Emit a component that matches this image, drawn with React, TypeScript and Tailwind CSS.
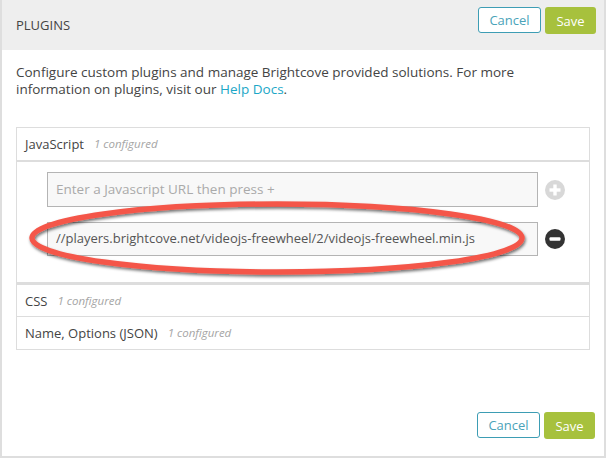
import React from "react";

const font = { fontFamily: '"Open Sans", "Liberation Sans", sans-serif' };

function Btns() {
  return (
    <div className="flex items-start gap-[4px]">
      <button className="h-[26px] w-[63px] rounded-[3px] border border-[#3d9db4] bg-white text-[13px] leading-[24px] text-[#4aa3b9]">
        Cancel
      </button>
      <button className="h-[27px] w-[51px] rounded-[3px] bg-[#a7c13d] text-[13px] leading-[26px] text-white">
        Save
      </button>
    </div>
  );
}

function Row({ name, last }: { name: string; last?: boolean }) {
  return (
    <div className={"flex h-[32px] items-center pl-[8px] " + (last ? "" : "border-b border-[#dddddd]")}>
      <span className="text-[13px] leading-[18px] text-[#444]">{name}</span>
      <span className="ml-[10px] text-[11.5px] leading-[18px] italic text-[#a5a5a5]">1 configured</span>
    </div>
  );
}

export default function App() {
  return (
    <div style={font} className="relative flex h-[458px] w-[606px] flex-col border-x-2 border-b-2 border-[#dedede] bg-white">
      <div className="flex h-[50px] items-start justify-between bg-[#eeeeee] pl-[14px] pr-[8px]">
        <span className="mt-[15px] text-[13px] leading-[20px] text-[#444]">PLUGINS</span>
        <div className="mt-[7px]">
          <Btns />
        </div>
      </div>
      <p className="mt-[14px] pl-[14px] pr-[20px] text-[13.5px] leading-[17px] text-[#444]">
        Configure custom plugins and manage Brightcove provided solutions. For more
        <br />
        information on plugins, visit our <span className="text-[#1ca7c7]">Help Docs</span>.
      </p>
      <div className="ml-[14px] mt-[29px] w-[574px] border border-[#dddddd]">
        <div className="flex h-[34px] items-center border-b-2 border-[#dddddd] pl-[8px]">
          <span className="text-[13px] leading-[18px] text-[#444]">JavaScript</span>
          <span className="ml-[10px] text-[11.5px] leading-[18px] italic text-[#a5a5a5]">1 configured</span>
        </div>
        <div className="flex flex-col gap-[15px] border-b-[3px] border-[#dddddd] pb-[26px] pl-[30px] pr-[24px] pt-[10px]">
          <div className="flex items-center">
            <div className="flex h-[35px] w-[491px] items-center border border-[#b4b4b4] bg-[#f8f8f8] pl-[8px] text-[13.5px] text-[#aaaaaa]">
              Enter a Javascript URL then press +
            </div>
            <svg width="20" height="20" viewBox="0 0 20 20" className="ml-[7px]">
              <circle cx="10" cy="10" r="10" fill="#d8d8d8" />
              <rect x="4.5" y="8.3" width="11" height="3.4" fill="#fff" />
              <rect x="8.3" y="4.5" width="3.4" height="11" fill="#fff" />
            </svg>
          </div>
          <div className="flex items-center">
            <div className="flex h-[34px] w-[491px] items-center border border-[#b4b4b4] bg-[#f8f8f8] pl-[8px] text-[13px] text-[#555]">
              //players.brightcove.net/videojs-freewheel/2/videojs-freewheel.min.js
            </div>
            <svg width="20" height="20" viewBox="0 0 20 20" className="ml-[7px]">
              <circle cx="10" cy="10" r="10" fill="#333333" />
              <rect x="4.5" y="8.3" width="11" height="3.4" rx="1" fill="#fff" />
            </svg>
          </div>
        </div>
        <Row name="CSS" />
        <Row name="Name, Options (JSON)" last />
      </div>
      <div className="flex-1" />
      <div className="flex justify-end pb-[17px] pr-[9px]">
        <Btns />
      </div>
      <svg className="pointer-events-none absolute left-0 top-0" width="606" height="458">
        <defs>
          <filter id="sh" x="-10%" y="-30%" width="120%" height="160%">
            <feDropShadow dx="1" dy="2" stdDeviation="1.5" floodColor="#000" floodOpacity="0.55" />
          </filter>
        </defs>
        <ellipse cx="275" cy="238" rx="245" ry="34" fill="none" stroke="#f4574a" strokeWidth="5.5" filter="url(#sh)" />
      </svg>
    </div>
  );
}
